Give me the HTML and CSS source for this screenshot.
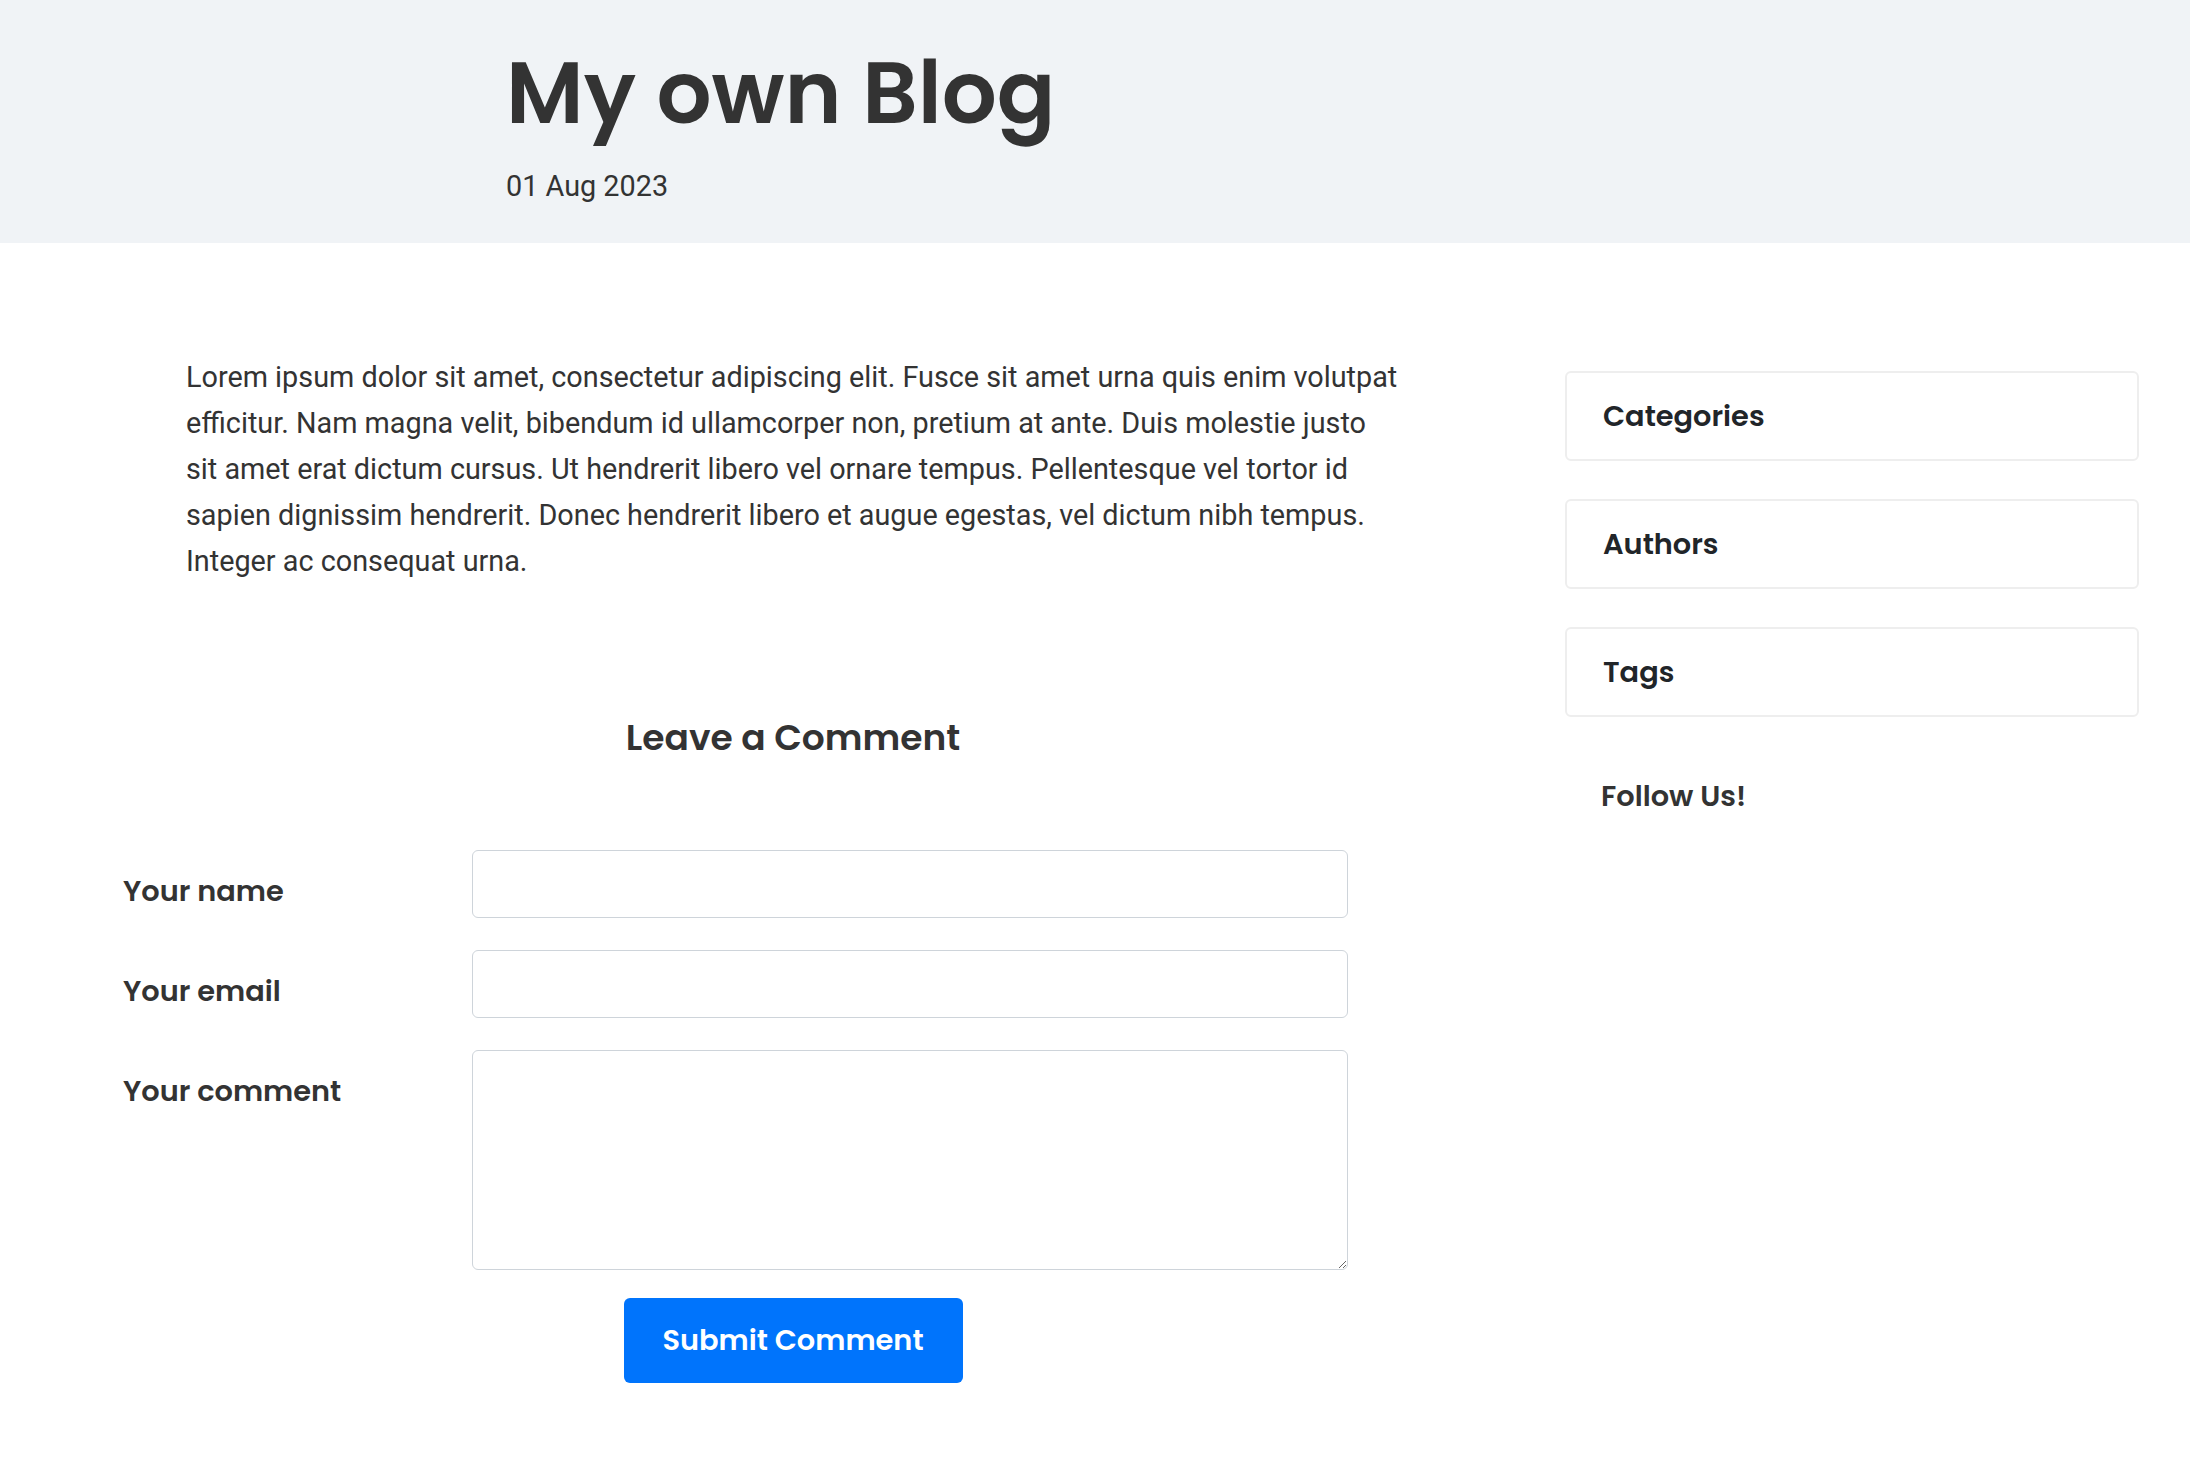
FILE: index.html
```html
<!DOCTYPE html>
<html lang="en">
<head>
  <meta charset="UTF-8" />
  <meta name="viewport" content="width=device-width, initial-scale=1.0"/>
  <title>My own Blog</title>
  <link rel="stylesheet" href="styles.css">
</head>
<body>

<!-- Post header -->
<header class="post-header">
  <h1 class="post-title">My own Blog</h1>
  <p class="post-date">01 Aug 2023</p>
</header>

<div class="page">
  <main class="main-col">
    <p class="post-body">Lorem ipsum dolor sit amet, consectetur adipiscing elit. Fusce sit amet urna quis enim volutpat efficitur. Nam magna velit, bibendum id ullamcorper non, pretium at ante. Duis molestie justo sit amet erat dictum cursus. Ut hendrerit libero vel ornare tempus. Pellentesque vel tortor id sapien dignissim hendrerit. Donec hendrerit libero et augue egestas, vel dictum nibh tempus. Integer ac consequat urna.</p>

    <!-- Comment form -->
    <section class="comment-box">
      <h3 class="comment-title">Leave a Comment</h3>
      <form class="comment-form" onsubmit="return false;">
        <label class="form-label" for="name">Your name</label>
        <input class="form-input" type="text" id="name" />

        <label class="form-label" for="email">Your email</label>
        <input class="form-input" type="email" id="email" />

        <label class="form-label" for="comment">Your comment</label>
        <textarea class="form-input form-textarea" id="comment"></textarea>
      </form>
      <button class="submit-btn" type="button">Submit Comment</button>
    </section>
  </main>

  <aside class="sidebar">
    <div class="widget"><h4 class="widget-title">Categories</h4></div>
    <div class="widget"><h4 class="widget-title">Authors</h4></div>
    <div class="widget"><h4 class="widget-title">Tags</h4></div>
    <h4 class="follow-title">Follow Us!</h4>
  </aside>
</div>

</body>
</html>
```

FILE: styles.css
```css
* {
  margin: 0;
  padding: 0;
  box-sizing: border-box;
}

body {
  font-family: Roboto, 'Noto Sans', sans-serif;
  font-size: 28.8px;
  color: #333;
  background-color: #fff;
}

/* header band */
.post-header {
  background-color: #f0f3f6;
  height: 243px;
  padding: 41px 0 0 506px;
}

.post-title {
  font-family: Poppins, Inter, sans-serif;
  font-weight: 600;
  font-size: 86.4px;
  line-height: 1.2;
  color: #333;
}

.post-date {
  margin-top: 20px;
  line-height: 42px;
  color: #333;
}

/* two columns */
.page {
  display: flex;
  align-items: flex-start;
}

.main-col {
  margin-left: 108px;
  width: 1370px;
}

.post-body {
  margin: 111px 78px 0 78px;
  line-height: 46px;
  color: #333;
}

.comment-box {
  margin-top: 132px;
}

.comment-title {
  font-family: Poppins, Inter, sans-serif;
  font-weight: 600;
  font-size: 36px;
  line-height: 1.2;
  text-align: center;
  color: #333;
}

.comment-form {
  display: grid;
  grid-template-columns: 349px 876px;
  row-gap: 32px;
  margin-top: 91px;
  padding-left: 15px;
}

.form-label {
  font-family: Poppins, Inter, sans-serif;
  font-weight: 600;
  font-size: 28.8px;
  line-height: 36px;
  padding-top: 23px;
  color: #333;
}

.form-input {
  display: block;
  width: 100%;
  height: 68px;
  border: 1px solid #ced4da;
  border-radius: 6px;
  padding: 10px 18px;
  font-family: Roboto, sans-serif;
  font-size: 28.8px;
  outline: none;
}

.form-textarea {
  height: 220px;
  resize: vertical;
}

.submit-btn {
  display: block;
  margin: 28px auto 0 auto;
  width: 339px;
  height: 85px;
  background-color: #0074fc;
  color: #fff;
  border: none;
  border-radius: 6px;
  font-family: Poppins, Inter, sans-serif;
  font-weight: 600;
  font-size: 28.8px;
  cursor: pointer;
}

/* sidebar */
.sidebar {
  margin: 128px 0 0 87px;
  width: 574px;
}

.widget {
  height: 90px;
  border: 2px solid #eeeeee;
  border-radius: 6px;
  padding: 0 36px;
  display: flex;
  align-items: center;
  margin-bottom: 38px;
}

.widget-title {
  font-family: Poppins, Inter, sans-serif;
  font-weight: 600;
  font-size: 28.8px;
  color: #212529;
}

.follow-title {
  font-family: Poppins, Inter, sans-serif;
  font-weight: 600;
  font-size: 28.8px;
  color: #333;
  padding: 20px 0 0 36px;
}
```
